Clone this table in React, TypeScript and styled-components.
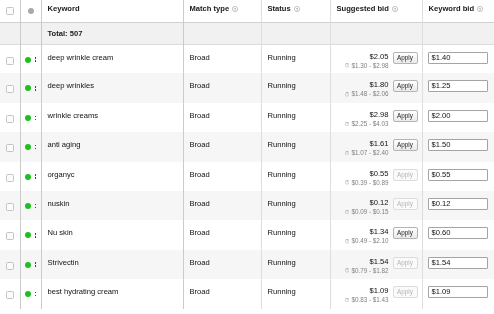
import React from "react";
import styled, { createGlobalStyle, css } from "styled-components";

const GlobalStyle = createGlobalStyle`
  html, body {
    margin: 0;
    padding: 0;
    background: #fff;
  }
  body {
    font-family: "Liberation Sans", Arial, Helvetica, sans-serif;
    color: #111;
    -webkit-font-smoothing: antialiased;
  }
`;

interface IKeywordRow {
  keyword: string;
  price: string;
  range: string;
  canApply: boolean;
  bid: string;
}

const ROWS: IKeywordRow[] = [
  { keyword: "deep wrinkle cream", price: "$2.05", range: "$1.30 - $2.98", canApply: true, bid: "$1.40" },
  { keyword: "deep wrinkles", price: "$1.80", range: "$1.48 - $2.06", canApply: true, bid: "$1.25" },
  { keyword: "wrinkle creams", price: "$2.98", range: "$2.25 - $4.03", canApply: true, bid: "$2.00" },
  { keyword: "anti aging", price: "$1.61", range: "$1.07 - $2.40", canApply: true, bid: "$1.50" },
  { keyword: "organyc", price: "$0.55", range: "$0.39 - $0.89", canApply: false, bid: "$0.55" },
  { keyword: "nuskin", price: "$0.12", range: "$0.09 - $0.15", canApply: false, bid: "$0.12" },
  { keyword: "Nu skin", price: "$1.34", range: "$0.49 - $2.10", canApply: true, bid: "$0.60" },
  { keyword: "Strivectin", price: "$1.54", range: "$0.79 - $1.82", canApply: false, bid: "$1.54" },
  { keyword: "best hydrating cream", price: "$1.09", range: "$0.83 - $1.43", canApply: false, bid: "$1.09" },
];

const COL_WIDTHS = [20, 21, 142, 78, 69, 92, 72];

const HelpIcon = ({ size = 6 }: { size?: number }) => (
  <HelpSvg width={size} height={size} viewBox="0 0 12 12" $size={size}>
    <circle cx="6" cy="6" r="5.2" fill="none" stroke="#a0a0a0" strokeWidth="1.2" />
    <text x="6" y="9" textAnchor="middle" fontSize="8" fontWeight="bold" fill="#a0a0a0" fontFamily="Liberation Sans, Arial, sans-serif">
      ?
    </text>
  </HelpSvg>
);

const KeywordTable = () => {
  return (
    <Table>
      <colgroup>
        {COL_WIDTHS.map((w, i) => (
          <col key={i} style={{ width: w }} />
        ))}
      </colgroup>
      <thead>
        <HeadRow>
          <HeadCell $center>
            <Checkbox />
          </HeadCell>
          <HeadCell $center $strong>
            <Dot $color="#a9a9a9" />
          </HeadCell>
          <HeadCell $strong>Keyword</HeadCell>
          <HeadCell $strong>
            Match type <HelpIcon />
          </HeadCell>
          <HeadCell>
            Status <HelpIcon />
          </HeadCell>
          <HeadCell>
            Suggested bid <HelpIcon />
          </HeadCell>
          <HeadCell>
            Keyword bid <HelpIcon />
          </HeadCell>
        </HeadRow>
      </thead>
      <tbody>
        <TotalRow>
          <TotalCell />
          <TotalCell $strong />
          <TotalCell $strong>Total: 507</TotalCell>
          <TotalCell $strong />
          <TotalCell />
          <TotalCell />
          <TotalCell />
        </TotalRow>
        {ROWS.map((row, index) => (
          <DataRow key={`${row.keyword}_${index}`} $striped={index % 2 === 1}>
            <Cell $center>
              <Checkbox />
            </Cell>
            <Cell $strong>
              <StatusBox>
                <Dot $color="#1fbf1f" />
                <Grip>
                  <i />
                  <i />
                </Grip>
              </StatusBox>
            </Cell>
            <Cell $strong>{row.keyword}</Cell>
            <Cell $strong>Broad</Cell>
            <Cell>Running</Cell>
            <Cell>
              <BidBox>
                <PriceBlock>
                  <Price>{row.price}</Price>
                  <Range>
                    <HelpIcon size={4.5} />
                    {row.range}
                  </Range>
                </PriceBlock>
                <ApplyButton $disabled={!row.canApply}>Apply</ApplyButton>
              </BidBox>
            </Cell>
            <Cell>
              <BidInput>{row.bid}</BidInput>
            </Cell>
          </DataRow>
        ))}
      </tbody>
    </Table>
  );
};

export default function App() {
  return (
    <>
      <GlobalStyle />
      <KeywordTable />
    </>
  );
}

const Table = styled.table`
  width: 494px;
  table-layout: fixed;
  border-collapse: collapse;
  font-size: 7.6px;
  line-height: 10px;
  will-change: transform;
`;

const cellBase = css<{ $center?: boolean; $strong?: boolean }>`
  padding: 0 4px 0 6px;
  vertical-align: top;
  white-space: nowrap;
  overflow: hidden;
  text-align: ${({ $center }) => ($center ? "center" : "left")};
  border-left: 1px solid ${({ $strong }) => ($strong ? "#cbcbcb" : "#dedede")};
  &:first-child {
    border-left: none;
    padding: 0;
  }
`;

const HeadRow = styled.tr`
  height: 22px;
  background: #fff;
  border-bottom: 1px solid #d0d0d0;
`;

const HeadCell = styled.th<{ $center?: boolean; $strong?: boolean }>`
  ${cellBase};
  padding-top: 4px;
  font-weight: bold;
  color: #1a1a1a;
  &:first-child {
    padding-top: 7px;
  }
  &:nth-child(2) {
    padding: 7px 0 0;
  }
`;

const TotalRow = styled.tr`
  height: 22px;
  background: #f1f1f1;
  border-bottom: 1px solid #dcdcdc;
`;

const TotalCell = styled.td<{ $strong?: boolean }>`
  ${cellBase};
  padding-top: 6px;
  font-weight: bold;
  color: #1a1a1a;
`;

const DataRow = styled.tr<{ $striped: boolean }>`
  height: 29.4px;
  background: ${({ $striped }) => ($striped ? "#f6f6f6" : "#fff")};
`;

const Cell = styled.td<{ $center?: boolean; $strong?: boolean }>`
  ${cellBase};
  padding-top: 8px;
  color: #111;
  &:first-child {
    padding-top: 12px;
  }
  &:nth-child(2) {
    padding: 0;
  }
  &:last-child {
    padding: 8px 0 0 5px;
  }
`;

const Checkbox = styled.span`
  display: inline-block;
  width: 6px;
  height: 6px;
  border: 1px solid #c4c4c4;
  border-radius: 1.5px;
  background: #fbfbfb;
`;

const Dot = styled.span<{ $color: string }>`
  display: inline-block;
  width: 6px;
  height: 6px;
  border-radius: 50%;
  background: ${({ $color }) => $color};
`;

const StatusBox = styled.div`
  display: flex;
  align-items: center;
  gap: 4px;
  padding: 12px 0 0 4px;
`;

const Grip = styled.span`
  display: flex;
  flex-direction: column;
  gap: 1.5px;
  i {
    display: block;
    width: 1.5px;
    height: 1.5px;
    background: #444;
  }
`;

const HelpSvg = styled.svg<{ $size: number }>`
  display: inline-block;
  vertical-align: ${({ $size }) => ($size > 5 ? "-1px" : "0")};
  margin-left: 1px;
  margin-right: ${({ $size }) => ($size > 5 ? "0" : "2px")};
`;

const BidBox = styled.div`
  display: flex;
  justify-content: flex-end;
  align-items: flex-start;
  gap: 4px;
  margin-top: -1px;
`;

const PriceBlock = styled.div`
  display: flex;
  flex-direction: column;
  align-items: flex-end;
`;

const Price = styled.span`
  font-size: 7.6px;
  line-height: 10px;
  color: #111;
`;

const Range = styled.span`
  font-size: 6.3px;
  line-height: 8px;
  color: #808080;
  display: flex;
  align-items: center;
`;

const ApplyButton = styled.span<{ $disabled: boolean }>`
  display: inline-flex;
  align-items: center;
  justify-content: center;
  width: 25px;
  height: 12px;
  box-sizing: border-box;
  font-size: 6.3px;
  border-radius: 2px;
  ${({ $disabled }) =>
    $disabled
      ? css`
          color: #b5b5b5;
          border: 1px solid #dcdcdc;
          background: #fafafa;
        `
      : css`
          color: #222;
          border: 1px solid #b4b4b4;
          background: linear-gradient(#ffffff, #eaeaea);
        `}
`;

const BidInput = styled.div`
  width: 60px;
  height: 12px;
  box-sizing: border-box;
  margin-top: -1px;
  padding: 0 3px;
  border: 1px solid #a4a4a4;
  border-radius: 1px;
  background: #fff;
  font-size: 7.6px;
  line-height: 10px;
  color: #111;
`;
